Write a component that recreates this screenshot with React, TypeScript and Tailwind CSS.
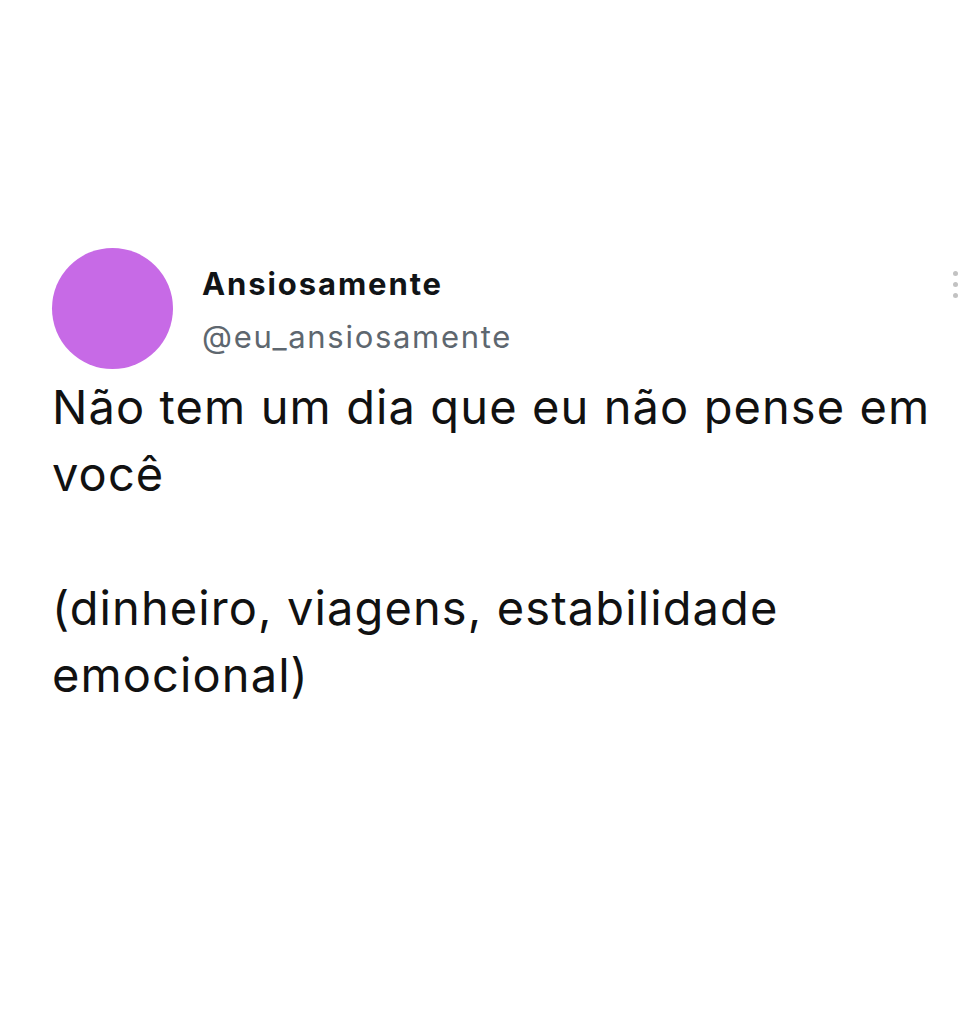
import React from 'react';

const lines = [
  'Não tem um dia que eu não pense em',
  'você',
  '',
  '(dinheiro, viagens, estabilidade',
  'emocional)',
];

export default function App() {
  return (
    <div className="w-[980px] h-[1024px] bg-white overflow-hidden font-['Inter','Liberation_Sans',sans-serif]">
      <div className="pt-[248px] pl-[52px] pr-[22px]">
        {/* Header: avatar, name, handle, menu dots */}
        <div className="flex items-start">
          <div className="w-[121px] h-[121px] rounded-full bg-[#c76ae6] shrink-0" />
          <div className="flex flex-col pl-[29px] pt-[18px]">
            <span className="text-[31px] leading-[36px] font-bold tracking-[1.9px] text-[#111417]">
              Ansiosamente
            </span>
            <span className="mt-[17px] text-[31px] leading-[36px] tracking-[1.7px] text-[#5e676f]">
              @eu_ansiosamente
            </span>
          </div>
          <div className="ml-auto mt-[23px] flex flex-col gap-[6px]">
            <span className="w-[5px] h-[5px] rounded-full bg-[#c2c2c2]" />
            <span className="w-[5px] h-[5px] rounded-full bg-[#c2c2c2]" />
            <span className="w-[5px] h-[5px] rounded-full bg-[#c2c2c2]" />
          </div>
        </div>

        {/* Tweet body */}
        <div className="mt-[4px] text-[47px] leading-[67px] tracking-[1.1px] text-[#111111]">
          {lines.map((l, i) => (
            <div key={i} className="whitespace-nowrap h-[67px]">
              {l}
            </div>
          ))}
        </div>
      </div>
    </div>
  );
}
